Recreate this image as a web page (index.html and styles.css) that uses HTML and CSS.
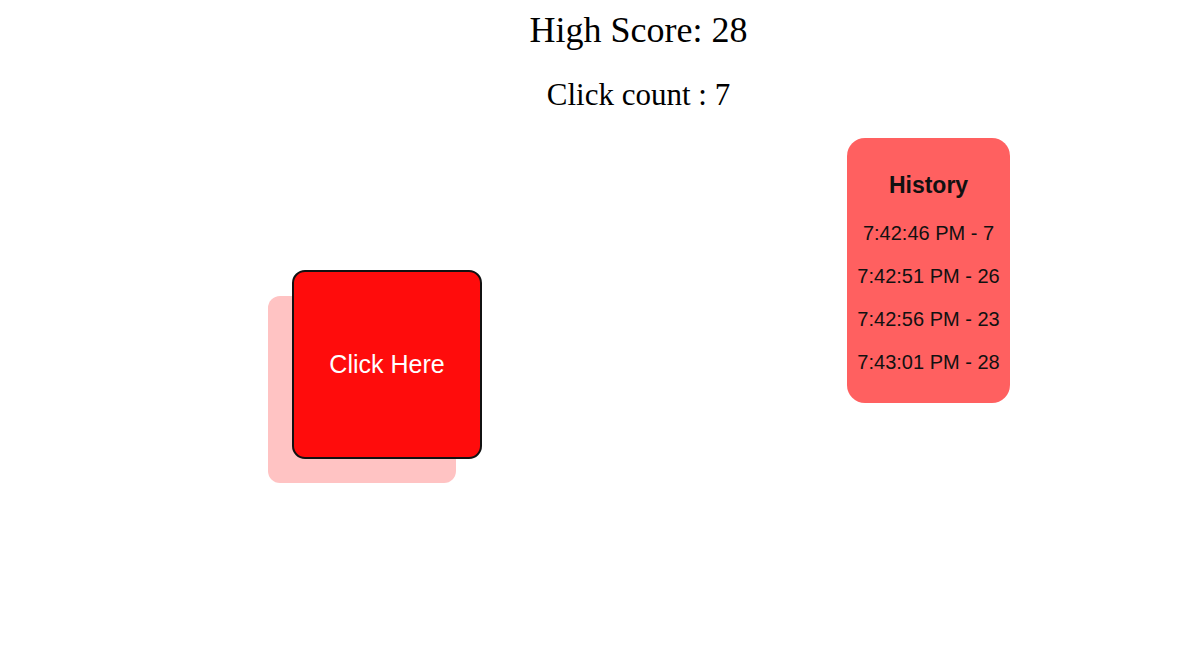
FILE: index.html
```html
<!DOCTYPE html>
<html>
<head>
<meta charset="utf-8">
<title>Click Game</title>
<link rel="stylesheet" href="styles.css">
</head>
<body>
  <header class="scores">
    <h1 class="high-score">High Score: 28</h1>
    <h2 class="click-count">Click count : 7</h2>
  </header>
  <main class="arena">
    <button class="target">Click Here</button>
    <aside class="history">
      <h3 class="history-title">History</h3>
      <ul class="history-list">
        <li>7:42:46 PM - 7</li>
        <li>7:42:51 PM - 26</li>
        <li>7:42:56 PM - 23</li>
        <li>7:43:01 PM - 28</li>
      </ul>
    </aside>
  </main>
</body>
</html>
```

FILE: styles.css
```css
html, body {
  margin: 0;
  padding: 0;
  background: #ffffff;
}

body {
  width: 1186px;
  height: 655px;
  overflow: hidden;
  font-family: "Liberation Serif", "Times New Roman", serif;
  color: #000;
}

.scores {
  padding-left: 91px;
  text-align: center;
}

.high-score {
  margin: 10px 0 0;
  font-size: 36px;
  line-height: 41px;
  font-weight: normal;
}

.click-count {
  margin: 26px 0 0;
  font-size: 31px;
  line-height: 35px;
  font-weight: normal;
}

.arena {
  position: relative;
  display: flex;
  justify-content: flex-end;
  align-items: flex-start;
  padding-right: 176px;
  height: 543px;
  box-sizing: border-box;
}

.target {
  position: absolute;
  left: 292px;
  top: 158px;
  width: 190px;
  height: 189px;
  box-sizing: border-box;
  margin: 0;
  padding: 0;
  border: 2px solid #111;
  border-radius: 13px;
  background: #ff0c0c;
  color: #ffffff;
  font-family: "Liberation Sans", Arial, sans-serif;
  font-size: 25px;
  box-shadow: -25px 25px 0 -1px #ffc3c3;
  cursor: pointer;
}

.history {
  margin-top: 26px;
  width: 163px;
  box-sizing: border-box;
  padding: 34px 0 29px;
  background: #ff6060;
  border-radius: 18px;
  text-align: center;
  font-family: "Liberation Sans", Arial, sans-serif;
  color: #111;
}

.history-title {
  margin: 0;
  font-size: 23px;
  line-height: 26px;
  font-weight: bold;
}

.history-list {
  list-style: none;
  margin: 24px 0 0;
  padding: 0;
  display: flex;
  flex-direction: column;
  gap: 20px;
  font-size: 20px;
  line-height: 23px;
}
```
